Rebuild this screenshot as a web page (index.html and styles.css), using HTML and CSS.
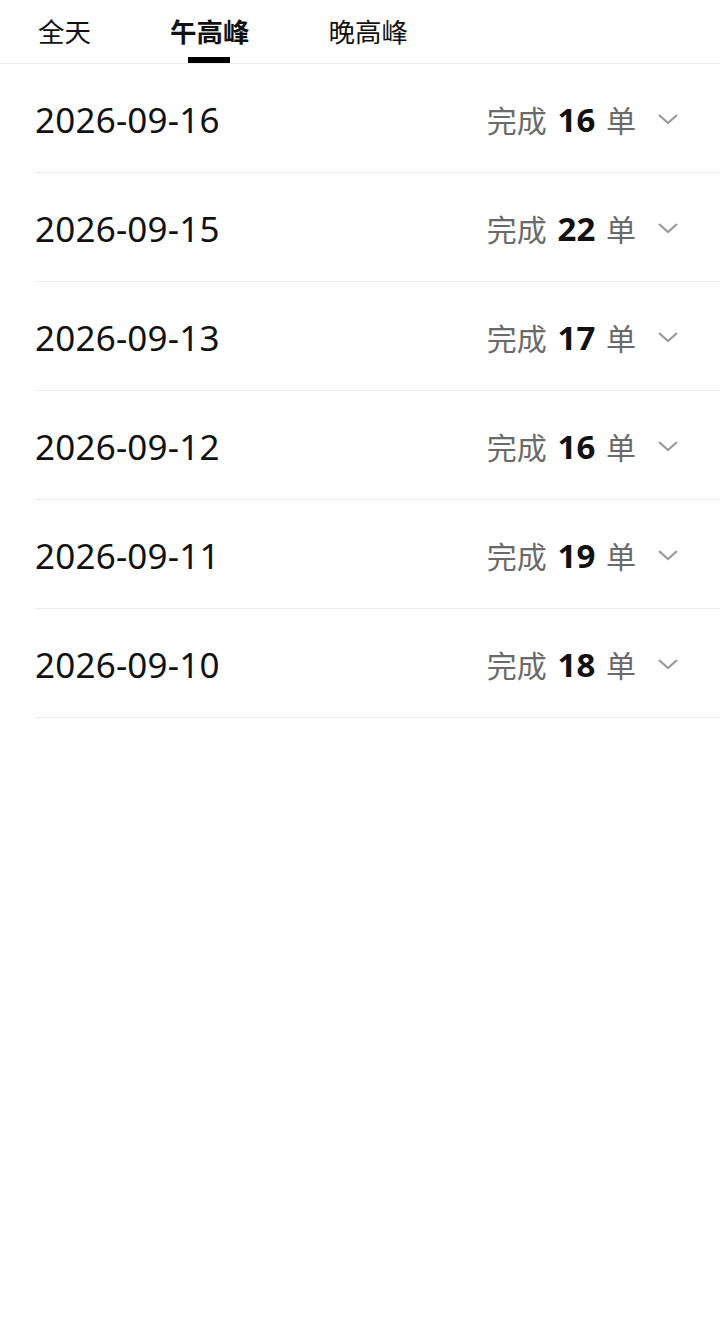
FILE: index.html
```html
<!DOCTYPE html>
<html lang="zh">
<head>
<meta charset="utf-8">
<link rel="stylesheet" href="styles.css">
</head>
<body>
<div class="tabs">
  <div class="tab">全天</div>
  <div class="tab active">午高峰</div>
  <div class="tab">晚高峰</div>
</div>
<ul class="list">
  <li class="row"><span class="date">2026-09-16</span><span class="stat">完成 <b>16</b> 单</span><svg class="chev" viewBox="0 0 22 14"><path d="M2 3 L11 11 L20 3" /></svg></li>
  <li class="row"><span class="date">2026-09-15</span><span class="stat">完成 <b>22</b> 单</span><svg class="chev" viewBox="0 0 22 14"><path d="M2 3 L11 11 L20 3" /></svg></li>
  <li class="row"><span class="date">2026-09-13</span><span class="stat">完成 <b>17</b> 单</span><svg class="chev" viewBox="0 0 22 14"><path d="M2 3 L11 11 L20 3" /></svg></li>
  <li class="row"><span class="date">2026-09-12</span><span class="stat">完成 <b>16</b> 单</span><svg class="chev" viewBox="0 0 22 14"><path d="M2 3 L11 11 L20 3" /></svg></li>
  <li class="row"><span class="date">2026-09-11</span><span class="stat">完成 <b>19</b> 单</span><svg class="chev" viewBox="0 0 22 14"><path d="M2 3 L11 11 L20 3" /></svg></li>
  <li class="row"><span class="date">2026-09-10</span><span class="stat">完成 <b>18</b> 单</span><svg class="chev" viewBox="0 0 22 14"><path d="M2 3 L11 11 L20 3" /></svg></li>
</ul>
</body>
</html>
```
FILE: styles.css
```css
* { box-sizing: border-box; }
html, body { margin: 0; padding: 0; background: #fff; }
body {
  font-family: "Noto Sans", "Noto Sans CJK SC", sans-serif;
  color: #111;
  width: 720px;
  height: 1323px;
}
.tabs {
  display: flex;
  height: 64px;
  border-bottom: 1px solid #ececec;
  padding-left: 38px;
}
.tab {
  position: relative;
  font-size: 26.5px;
  line-height: 62px;
  color: #111;
  font-family: "Noto Sans CJK SC", sans-serif;
}
.tab:nth-child(1) { margin-right: 79px; }
.tab:nth-child(2) { margin-right: 79px; }
.tab.active { font-weight: 700; }
.tab.active::after {
  content: "";
  position: absolute;
  left: 18px;
  width: 42px;
  bottom: 0;
  height: 6px;
  background: #000;
}
.list { list-style: none; margin: 0; padding: 0 0 0 35px; }
.row {
  display: flex;
  align-items: center;
  height: 109px;
  border-bottom: 1px solid #ececec;
  padding-right: 41px;
  padding-top: 2px;
}
.date {
  flex: 1;
  font-size: 35px;
  color: #111;
  letter-spacing: 0.2px;
}
.stat {
  font-family: "Noto Sans CJK SC", sans-serif;
  font-size: 30px;
  color: #6a6a6a;
  word-spacing: 4px;
}
.stat b {
  font-family: "Noto Sans", sans-serif;
  font-weight: 700;
  color: #111;
  font-size: 33px;
}
.chev {
  width: 22px;
  height: 14px;
  margin-left: 21px;
  fill: none;
  stroke: #9a9a9a;
  stroke-width: 2.2;
}
```
